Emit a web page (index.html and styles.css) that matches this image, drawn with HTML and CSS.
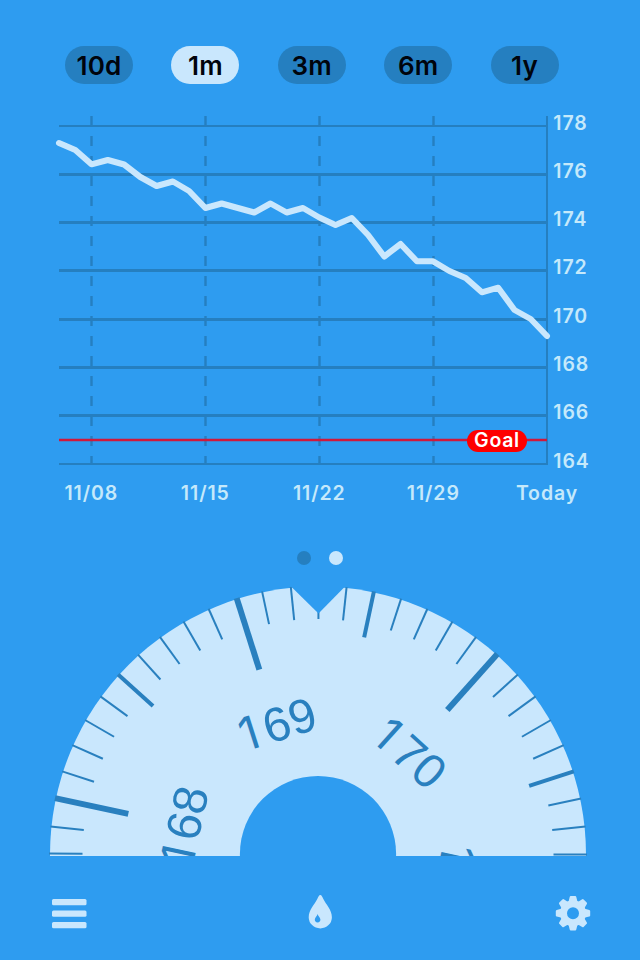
FILE: index.html
```html
<!DOCTYPE html>
<html lang="en">
<head>
<meta charset="utf-8">
<title>Weight</title>
<link rel="stylesheet" href="styles.css">
</head>
<body>
<main class="app">
  <nav class="ranges">
    <button class="range">10d</button>
    <button class="range active">1m</button>
    <button class="range">3m</button>
    <button class="range">6m</button>
    <button class="range">1y</button>
  </nav>

  <svg class="chart" viewBox="0 100 640 420">
    <g class="grid">
      <path class="thin" d="M59 126H548M59 464H548M547 116V465"/>
      <path d="M59 174.5H547M59 222.5H547M59 270.5H547M59 319.5H547M59 367.5H547M59 415.5H547"/>
      <path class="weeks" d="M91.5 116V463M205.5 116V463M319.5 116V463M433.5 116V463"/>
    </g>
    <path class="goal-line" d="M59 440H547"/>
    <polyline class="series" points="59,143 75.3,150 91.5,164.3 107.8,160 124.1,164.5 140.3,177 156.6,186 172.9,181.5 189.1,191 205.4,208 221.7,203.5 237.9,208 254.2,212.5 270.5,203.5 286.7,212.5 303,208 319.3,217.5 335.5,225 351.8,218 368.1,235 384.3,256.5 400.6,244 416.9,261.3 433.1,261.3 449.4,271 465.7,278 481.9,292.3 498.2,287.7 514.5,310 530.7,319 547,336"/>
    <rect class="goal-pill" x="467" y="430" width="60" height="22" rx="11"/>
    <text class="goal-text" x="497" y="447">Goal</text>
    <g class="values">
      <text x="553.3" y="130.4">178</text>
      <text x="553.3" y="178.4">176</text>
      <text x="553.3" y="226.4">174</text>
      <text x="553.3" y="274.4">172</text>
      <text x="553.3" y="323.4">170</text>
      <text x="553.3" y="371.4">168</text>
      <text x="553.3" y="419.4">166</text>
      <text x="553.3" y="468.4">164</text>
    </g>
    <g class="dates">
      <text x="91.3" y="500.3">11/08</text>
      <text x="205.3" y="500.3">11/15</text>
      <text x="319.3" y="500.3">11/22</text>
      <text x="433.3" y="500.3">11/29</text>
      <text x="547" y="500.3">Today</text>
    </g>
  </svg>

  <div class="pages"><span class="dot"></span><span class="dot current"></span></div>

  <svg class="dial" viewBox="0 580 640 276">
    <defs>
      <path id="minor" d="M0 -269V-235.5" stroke-width="2"/>
      <path id="half" d="M0 -269V-222" stroke-width="4"/>
      <path id="major" d="M0 -269V-194" stroke-width="6"/>
    </defs>
    <g transform="translate(318 854.5)">
      <circle class="face" r="268"/>
      <g class="ticks">
        <use href="#minor" transform="rotate(-89.8)"/>
        <use href="#minor" transform="rotate(-84)"/>
        <use href="#major" transform="rotate(-77.9)"/>
        <use href="#minor" transform="rotate(-72)"/>
        <use href="#minor" transform="rotate(-66)"/>
        <use href="#minor" transform="rotate(-60)"/>
        <use href="#minor" transform="rotate(-54)"/>
        <use href="#half" transform="rotate(-48)"/>
        <use href="#minor" transform="rotate(-42)"/>
        <use href="#minor" transform="rotate(-36)"/>
        <use href="#minor" transform="rotate(-30)"/>
        <use href="#minor" transform="rotate(-24)"/>
        <use href="#major" transform="rotate(-17.6)"/>
        <use href="#minor" transform="rotate(-12)"/>
        <use href="#minor" transform="rotate(-5.8)"/>
        <use href="#minor" transform="rotate(.1)"/>
        <use href="#minor" transform="rotate(6.1)"/>
        <use href="#half" transform="rotate(12)"/>
        <use href="#minor" transform="rotate(18)"/>
        <use href="#minor" transform="rotate(24)"/>
        <use href="#minor" transform="rotate(30)"/>
        <use href="#minor" transform="rotate(36)"/>
        <use href="#major" transform="rotate(41.8)"/>
        <use href="#minor" transform="rotate(48)"/>
        <use href="#minor" transform="rotate(54)"/>
        <use href="#minor" transform="rotate(60)"/>
        <use href="#minor" transform="rotate(66)"/>
        <use href="#half" transform="rotate(72)"/>
        <use href="#minor" transform="rotate(78)"/>
        <use href="#minor" transform="rotate(84)"/>
        <use href="#minor" transform="rotate(90)"/>
      </g>
      <g class="numbers">
        <text y="-120" transform="rotate(-78)"><tspan class="one" x="-38.5">1</tspan><tspan x="-13.3">68</tspan></text>
        <text y="-120" transform="rotate(-17.6)"><tspan class="one" x="-38.5">1</tspan><tspan x="-13.3">69</tspan></text>
        <text y="-120" transform="rotate(42)"><tspan class="one" x="-38.5">1</tspan><tspan x="-13.3">70</tspan></text>
        <text y="-120" transform="rotate(102)"><tspan class="one" x="-38.5">1</tspan><tspan x="-13.3">7</tspan><tspan class="one" x="13.4">1</tspan></text>
      </g>
      <circle class="hub" cy="-.4" r="78.1"/>
      <path class="hub" d="M-29 -270L0.5 -241L29 -270Z"/>
    </g>
  </svg>

  <footer class="toolbar">
    <svg class="icon" viewBox="0 0 36 36">
      <rect x="1" y="4" width="34.5" height="6.2" rx="1.5"/>
      <rect x="1" y="15.6" width="34.5" height="6.2" rx="1.5"/>
      <rect x="1" y="27" width="34.5" height="6.2" rx="1.5"/>
    </svg>
    <svg class="icon" viewBox="1 0 36 36">
      <path fill-rule="evenodd" d="M18.3 0C16.9 0 16.4 1.8 15.4 3.8C12.8 9.3 6.7 15 6.7 22.2A11.6 11.2 0 0 0 29.9 22.2C29.9 15 23.8 9.3 21.2 3.8C20.2 1.8 19.7 0 18.3 0ZM15.6 18.9C16 21.2 18.4 22.3 18.4 24.6A2.8 2.8 0 0 1 12.8 24.6C12.8 22.3 15.2 21.2 15.6 18.9Z"/>
    </svg>
    <svg class="icon" viewBox="-18 -18.2 36 36">
      <defs><path id="tooth" d="M-4.6 -11L-3.3 -16.3Q-3.1 -17.2 -2.2 -17.2H2.2Q3.1 -17.2 3.3 -16.3L4.6 -11Z"/></defs>
      <path fill-rule="evenodd" d="M0 -13A13 13 0 0 1 0 13A13 13 0 0 1 0 -13ZM0 -6A6 6 0 0 0 0 6A6 6 0 0 0 0 -6Z"/>
      <use href="#tooth"/>
      <use href="#tooth" transform="rotate(45)"/>
      <use href="#tooth" transform="rotate(90)"/>
      <use href="#tooth" transform="rotate(135)"/>
      <use href="#tooth" transform="rotate(180)"/>
      <use href="#tooth" transform="rotate(225)"/>
      <use href="#tooth" transform="rotate(270)"/>
      <use href="#tooth" transform="rotate(315)"/>
    </svg>
  </footer>
</main>
</body>
</html>
```
FILE: styles.css
```css
:root {
  --bg: #2e9cf0;
  --dark: #257fc0;
  --light: #c9e7fd;
}

body {
  margin: 0;
  background: var(--bg);
  font-family: Inter, "Liberation Sans", sans-serif;
}

.app {
  display: flex;
  flex-direction: column;
  width: 640px;
  height: 960px;
  overflow: hidden;
}

.ranges {
  display: flex;
  gap: 38.4px;
  height: 38px;
  padding: 46px 0 16px 65px;
}

.range {
  box-sizing: border-box;
  width: 68px;
  height: 38px;
  padding: 1px 0 0;
  border: 0;
  border-radius: 19px;
  background: var(--dark);
  color: #00040c;
  font: 600 26px/37px Inter, "Liberation Sans", sans-serif;
  letter-spacing: .2px;
}

.range.active {
  background: var(--light);
}

.chart,
.dial {
  display: block;
  width: 640px;
}

.chart {
  height: 420px;
}

.grid path {
  fill: none;
  stroke: var(--dark);
  stroke-width: 3;
}

.grid .thin {
  stroke-width: 2;
}

.grid .weeks {
  stroke-dasharray: 10 10;
  stroke-width: 2.4;
}

.goal-line {
  stroke: #d0183c;
  stroke-width: 2.4;
}

.series {
  fill: none;
  stroke: var(--light);
  stroke-width: 6;
  stroke-linecap: round;
  stroke-linejoin: round;
}

.goal-pill {
  fill: #fe0000;
}

.chart text {
  fill: #c5e9fb;
  font-size: 19.5px;
  font-weight: 600;
  letter-spacing: .9px;
}

.chart .goal-text {
  fill: #fff;
  letter-spacing: .7px;
}

.dates text,
.goal-text {
  text-anchor: middle;
}

.pages {
  display: flex;
  gap: 18px;
  justify-content: center;
  height: 29px;
  padding-top: 31px;
}

.dot {
  width: 14px;
  height: 14px;
  border-radius: 50%;
  background: var(--dark);
}

.dot.current {
  background: var(--light);
}

.dial {
  height: 276px;
}

.face {
  fill: var(--light);
}

.hub {
  fill: var(--bg);
}

.ticks {
  stroke: #2980bf;
}

.numbers text {
  fill: #2980bf;
  font: 400 48px "Liberation Sans", sans-serif;
}

.numbers .one {
  font: 400 46px Inter, sans-serif;
}

.toolbar {
  display: flex;
  justify-content: space-between;
  padding: 39px 49px 0 51px;
}

.icon {
  width: 36px;
  height: 36px;
  fill: var(--light);
}
```
